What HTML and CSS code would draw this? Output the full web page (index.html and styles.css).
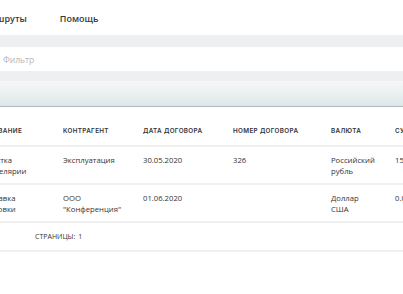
FILE: index.html
```html
<!DOCTYPE html>
<html lang="ru">
<head>
<meta charset="utf-8">
<link rel="stylesheet" href="styles.css">
</head>
<body>
<div class="page">
  <nav class="nav">
    <a class="nav-item">Маршруты</a>
    <a class="nav-item">Помощь</a>
  </nav>
  <div class="band"></div>
  <div class="filter">
    <input class="filter-input" type="text" placeholder="Фильтр">
  </div>
  <div class="band band-low"></div>
  <div class="toolbar"></div>
  <table class="grid">
    <colgroup>
      <col class="c1"><col class="c2"><col class="c3"><col class="c4"><col class="c5"><col class="c6">
    </colgroup>
    <thead>
      <tr>
        <th>Название</th>
        <th>Контрагент</th>
        <th>Дата договора</th>
        <th>Номер договора</th>
        <th>Валюта</th>
        <th>Сумма</th>
      </tr>
    </thead>
    <tbody>
      <tr>
        <td>Очистка канцелярии</td>
        <td>Эксплуатация</td>
        <td>30.05.2020</td>
        <td>326</td>
        <td>Российский рубль</td>
        <td>150000.00</td>
      </tr>
      <tr>
        <td>Поставка упаковки</td>
        <td>ООО "Конференция"</td>
        <td>01.06.2020</td>
        <td></td>
        <td>Доллар США</td>
        <td>0.00</td>
      </tr>
    </tbody>
  </table>
  <div class="pager">Страницы: <span class="pager-num">1</span></div>
</div>
</body>
</html>
```
FILE: styles.css
```css
html, body {
  margin: 0;
  padding: 0;
  overflow: hidden;
  background: #fff;
}
body {
  font-family: "Open Sans", "Noto Sans", sans-serif;
  color: #333;
}
.page {
  margin-left: -40px;
  width: 520px;
}
.nav {
  height: 35px;
  display: flex;
  align-items: center;
  gap: 33px;
  padding-left: 17px;
  padding-top: 2px;
  box-sizing: border-box;
}
.nav-item {
  font-size: 9px;
  font-weight: 600;
  color: #3a3a3a;
}
.band {
  height: 12px;
  background: #edeff1;
}
.band-low {
  height: 10px;
}
.filter {
  height: 24px;
  display: flex;
  align-items: center;
  background: #fff;
}
.filter-input {
  border: none;
  outline: none;
  margin: 0;
  padding: 0 0 0 43px;
  font-family: "Open Sans", sans-serif;
  font-size: 8.5px;
  color: #333;
  background: transparent;
  width: 300px;
  height: 24px;
}
.filter-input::placeholder {
  color: #b4b4b4;
}
.toolbar {
  height: 25px;
  background: linear-gradient(#f6f7f7, #dde8ea);
  border-bottom: 1px solid #aeb8bc;
}
.grid {
  margin-top: 10px;
  border-collapse: collapse;
  table-layout: fixed;
  width: 520px;
}
.c1 { width: 103px; }
.c2 { width: 80px; }
.c3 { width: 90px; }
.c4 { width: 98px; }
.c5 { width: 64px; }
.c6 { width: 85px; }
.grid th {
  font-family: Inter, "Noto Sans", sans-serif;
  font-size: 6.3px;
  font-weight: 600;
  letter-spacing: 0.35px;
  text-transform: uppercase;
  text-align: left;
  color: #333;
  line-height: 9px;
  padding: 10px 21px 9px 0;
  border-bottom: 2px solid #f0f0f0;
  white-space: nowrap;
}
.grid td {
  font-size: 7.7px;
  line-height: 10.5px;
  color: #333;
  text-align: left;
  vertical-align: top;
  padding: 8px 21px 7px 0;
  border-bottom: 2px solid #f0f0f0;
}
.grid th:first-child {
  padding-left: 24px;
}
.grid td:first-child {
  padding-left: 21px;
}
.grid tbody tr:last-child td {
  border-bottom: none;
}
.pager {
  border-top: 2px solid #f0f0f0;
  border-bottom: 2px solid #f0f0f0;
  display: flex;
  align-items: center;
  padding-left: 75px;
  font-size: 7px;
  text-transform: uppercase;
  color: #333;
  box-sizing: border-box;
  height: 31px;
}
.pager-num {
  margin-left: 3px;
}
```
